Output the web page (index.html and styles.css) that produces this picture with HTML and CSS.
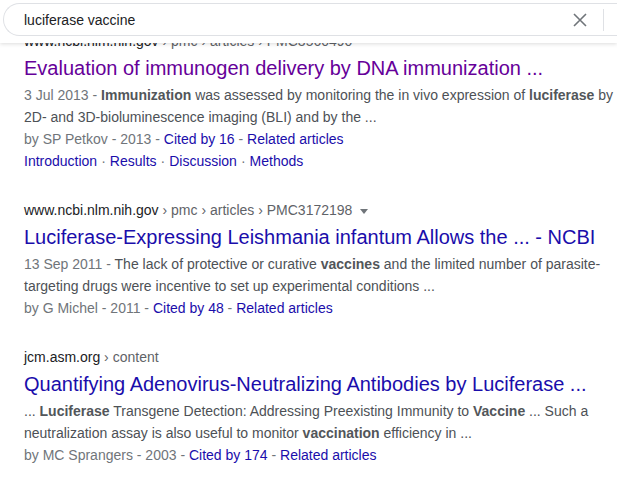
FILE: index.html
```html
<!DOCTYPE html>
<html lang="en">
<head>
<meta charset="utf-8">
<title>luciferase vaccine - Search</title>
<link rel="stylesheet" href="styles.css">
</head>
<body>
<header class="topbar">
  <div class="searchbox">
    <span class="query">luciferase vaccine</span>
    <span class="clear" aria-label="Clear">
      <svg width="14" height="14" viewBox="0 0 14 14"><path d="M1 1 L13 13 M13 1 L1 13" stroke="#70757a" stroke-width="1.6" fill="none"/></svg>
    </span>
    <span class="divider"></span>
  </div>
</header>
<main class="results">
  <div class="result">
    <div class="cite"><span class="domain">www.ncbi.nlm.nih.gov</span> › pmc › articles › PMC3560490</div>
    <a class="title visited" href="#">Evaluation of immunogen delivery by DNA immunization ...</a>
    <div class="snippet"><span class="date">3 Jul 2013 - </span><b>Immunization</b> was assessed by monitoring the in vivo expression of <b>luciferase</b> by 2D- and 3D-bioluminescence imaging (BLI) and by the ...</div>
    <div class="meta">by SP Petkov - 2013 - <a href="#">Cited by 16</a> - <a href="#">Related articles</a></div>
    <div class="sitelinks"><a href="#">Introduction</a><span class="dot">·</span><a href="#">Results</a><span class="dot">·</span><a href="#">Discussion</a><span class="dot">·</span><a href="#">Methods</a></div>
  </div>
  <div class="result">
    <div class="cite"><span class="domain">www.ncbi.nlm.nih.gov</span> › pmc › articles › PMC3172198 <span class="caret"></span></div>
    <a class="title" href="#">Luciferase-Expressing Leishmania infantum Allows the ... - NCBI</a>
    <div class="snippet"><span class="date">13 Sep 2011 - </span>The lack of protective or curative <b>vaccines</b> and the limited number of parasite-targeting drugs were incentive to set up experimental conditions ...</div>
    <div class="meta">by G Michel - 2011 - <a href="#">Cited by 48</a> - <a href="#">Related articles</a></div>
  </div>
  <div class="result">
    <div class="cite"><span class="domain">jcm.asm.org</span> › content</div>
    <a class="title" href="#">Quantifying Adenovirus-Neutralizing Antibodies by Luciferase ...</a>
    <div class="snippet">... <b>Luciferase</b> Transgene Detection: Addressing Preexisting Immunity to <b>Vaccine</b> ... Such a neutralization assay is also useful to monitor <b>vaccination</b> efficiency in ...</div>
    <div class="meta">by MC Sprangers - 2003 - <a href="#">Cited by 174</a> - <a href="#">Related articles</a></div>
  </div>
</main>
</body>
</html>
```
FILE: styles.css
```css
html, body {
  margin: 0;
  padding: 0;
  background: #fff;
  font-family: Arial, "Liberation Sans", sans-serif;
  font-size: 14px;
  color: #4d5156;
}
.topbar {
  position: absolute;
  top: 0;
  left: 0;
  right: 0;
  height: 43px;
  background: #fff;
  box-shadow: 0 1px 4px rgba(0,0,0,0.14);
  z-index: 2;
  overflow: hidden;
}
.searchbox {
  margin: 3px 0 0 3px;
  height: 31px;
  border: 1px solid #dfe1e5;
  border-right: none;
  border-radius: 17px 0 0 17px;
  display: flex;
  align-items: center;
  padding-left: 20px;
}
.query {
  flex: 1;
  color: #202124;
  font-size: 14px;
}
.clear {
  display: flex;
  align-items: center;
  margin-right: 16px;
}
.divider {
  width: 1px;
  height: 22px;
  background: #dfe1e5;
  margin-right: 13px;
}
.results {
  padding: 30px 0 20px 24px;
  width: 592px;
}
.result {
  margin-bottom: 27px;
}
.cite {
  line-height: 22px;
  color: #5f6368;
  white-space: nowrap;
}
.domain {
  color: #202124;
}
.caret {
  display: inline-block;
  width: 0;
  height: 0;
  border-left: 4px solid transparent;
  border-right: 4px solid transparent;
  border-top: 5px solid #70757a;
  margin-left: 4px;
  vertical-align: middle;
}
.title {
  display: block;
  font-size: 20px;
  line-height: 26px;
  padding-top: 3px;
  color: #1a0dab;
  text-decoration: none;
  white-space: nowrap;
}
.title.visited {
  color: #660099;
}
.snippet {
  margin-top: 3px;
  line-height: 22px;
  color: #4d5156;
}
.snippet b {
  color: #52565a;
}
.date {
  color: #70757a;
}
.meta {
  line-height: 22px;
  color: #70757a;
}
.meta a, .sitelinks a {
  color: #1a0dab;
  text-decoration: none;
}
.sitelinks {
  line-height: 22px;
}
.dot {
  color: #70757a;
  margin: 0 4px;
}
```
